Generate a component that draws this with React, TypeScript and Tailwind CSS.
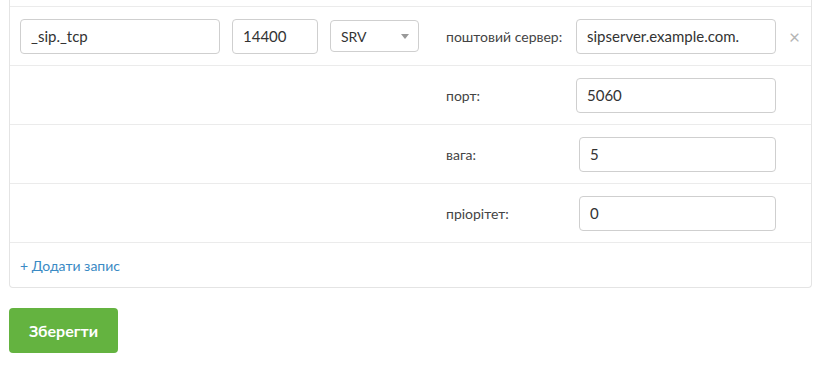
import React, { JSX } from "react";

type Row = {
  label: string;
  value: string;
  offset?: boolean;
};

const rows: Row[] = [
  { label: "порт:", value: "5060" },
  { label: "вага:", value: "5", offset: true },
  { label: "пріорітет:", value: "0", offset: true },
];

function Field({ value, className }: { value: string; className: string }): JSX.Element {
  return (
    <div
      className={
        "h-[35px] flex items-center px-[10px] border border-[#cfcfcf] rounded-[4px] bg-white text-[15px] text-[#333] " +
        className
      }
    >
      {value}
    </div>
  );
}

export default function App(): JSX.Element {
  return (
    <div className="w-[819px] h-[367px] bg-white font-['Lato',sans-serif] text-[#333]">
      <div className="ml-[9px] w-[803px] border-x border-b border-[#e4e4e4] rounded-b-[4px]">
        <div className="h-[6px]" />
        <div className="h-[59px] flex items-center border-t border-[#ebebeb] pl-[10px]">
          <Field value="_sip._tcp" className="w-[200px]" />
          <Field value="14400" className="w-[86px] ml-[12px]" />
          <div className="w-[89px] h-[32px] ml-[12px] flex items-center justify-between pl-[10px] pr-[9px] border border-[#cfcfcf] rounded-[4px] text-[14px]">
            <span>SRV</span>
            <svg width="8" height="5" viewBox="0 0 8 5">
              <path d="M0 0h8L4 5z" fill="#999" />
            </svg>
          </div>
          <div className="w-[130px] ml-[27px] text-[14px] text-[#444]">поштовий сервер:</div>
          <Field value="sipserver.example.com." className="w-[200px] text-[15.5px]" />
          <span className="ml-[13px] text-[19px] text-[#b5b5b5] leading-none">×</span>
        </div>
        {rows.map((r) => (
          <div key={r.label} className="h-[59px] flex items-center border-t border-[#ebebeb]">
            <div className="w-[436px]" />
            <div className={(r.offset ? "w-[133px]" : "w-[130px]") + " text-[14px] text-[#444]"}>
              {r.label}
            </div>
            <Field value={r.value} className={r.offset ? "w-[197px]" : "w-[200px]"} />
          </div>
        ))}
        <div className="h-[45px] flex items-center border-t border-[#ebebeb] pl-[10px] text-[14px] text-[#3a8ac4]">
          + Додати запис
        </div>
      </div>
      <button
        type="submit"
        className="mt-[20px] ml-[9px] w-[109px] h-[45px] rounded-[4px] bg-[#64b340] text-white font-bold text-[16px]"
      >
        Зберегти
      </button>
    </div>
  );
}
